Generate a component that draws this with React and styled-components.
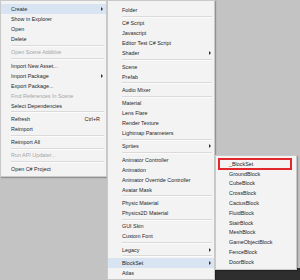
import React from 'react'
import styled, { createGlobalStyle } from 'styled-components'

const GlobalStyle = createGlobalStyle`
    html, body {
        margin: 0;
        padding: 0;
        background: #c3c3c3;
    }
`

const mainItems = [
    { label: 'Create', arrow: true, active: true },
    { label: 'Show in Explorer' },
    { label: 'Open' },
    { label: 'Delete' },
    '-',
    { label: 'Open Scene Additive', disabled: true },
    '-',
    { label: 'Import New Asset...' },
    { label: 'Import Package', arrow: true },
    { label: 'Export Package...' },
    { label: 'Find References In Scene', disabled: true },
    { label: 'Select Dependencies' },
    '-',
    { label: 'Refresh', shortcut: 'Ctrl+R' },
    { label: 'Reimport' },
    '-',
    { label: 'Reimport All' },
    '-',
    { label: 'Run API Updater...', disabled: true },
    '-',
    { label: 'Open C# Project' },
]

const createItems = [
    { label: 'Folder' },
    '-',
    { label: 'C# Script' },
    { label: 'Javascript' },
    { label: 'Editor Test C# Script' },
    { label: 'Shader', arrow: true },
    '-',
    { label: 'Scene' },
    { label: 'Prefab' },
    '-',
    { label: 'Audio Mixer' },
    '-',
    { label: 'Material' },
    { label: 'Lens Flare' },
    { label: 'Render Texture' },
    { label: 'Lightmap Parameters' },
    '-',
    { label: 'Sprites', arrow: true },
    '-',
    { label: 'Animator Controller' },
    { label: 'Animation' },
    { label: 'Animator Override Controller' },
    { label: 'Avatar Mask' },
    '-',
    { label: 'Physic Material' },
    { label: 'Physics2D Material' },
    '-',
    { label: 'GUI Skin' },
    { label: 'Custom Font' },
    '-',
    { label: 'Legacy', arrow: true },
    '-',
    { label: 'BlockSet', arrow: true, active: true },
    { label: 'Atlas' },
]

const blockItems = [
    { label: '_BlockSet', marked: true },
    { label: 'GroundBlock' },
    { label: 'CubeBlock' },
    { label: 'CrossBlock' },
    { label: 'CactusBlock' },
    { label: 'FluidBlock' },
    { label: 'StairBlock' },
    { label: 'MeshBlock' },
    { label: 'GameObjectBlock' },
    { label: 'FenceBlock' },
    { label: 'DoorBlock' },
]

const Menu = ({ items, ...rest }) => (
    <MenuBox {...rest}>
        {items.map((item, i) =>
            item === '-' ? (
                <Separator key={i} />
            ) : (
                <Row
                    key={i}
                    $active={item.active}
                    $disabled={item.disabled}
                    $marked={item.marked}>
                    <Label>{item.label}</Label>
                    {item.shortcut && <Shortcut>{item.shortcut}</Shortcut>}
                    {item.arrow && <Arrow />}
                </Row>
            )
        )}
    </MenuBox>
)

const App = () => {
    return (
        <>
            <GlobalStyle />
            <Desktop>
                <Menu items={mainItems} $width={107} $indent={11} $top={3} $bottom={2} />
                <Menu items={createItems} $width={108} $indent={15} $top={4} $bottom={1} />
                <Menu
                    items={blockItems}
                    $width={82}
                    $indent={14}
                    $top={3}
                    $bottom={2}
                    $offset={155}
                    $row={9.8}
                />
            </Desktop>
        </>
    )
}

export default App

const Desktop = styled.div`
    position: relative;
    width: 300px;
    height: 280px;
    overflow: hidden;
    display: flex;
    align-items: flex-start;
    background: #c3c3c3;
    font-family: 'Liberation Sans', Arial, sans-serif;

    &::before {
        content: '';
        position: absolute;
        left: 183px;
        right: 0;
        top: 268px;
        bottom: 0;
        background: #2e2e2e;
    }
`

const MenuBox = styled.div`
    position: relative;
    z-index: 1;
    flex: none;
    box-sizing: border-box;
    width: ${(p) => p.$width}px;
    margin-top: ${(p) => p.$offset || 0}px;
    padding: ${(p) => p.$top}px 0 ${(p) => p.$bottom}px;
    background: #f3f3f3;
    border: 1px solid #c9c9c9;
    box-shadow: 1px 1px 1px rgba(0, 0, 0, 0.25);
    --indent: ${(p) => p.$indent}px;
    --row: ${(p) => p.$row || 10}px;
`

const Row = styled.div`
    position: relative;
    display: flex;
    align-items: center;
    height: var(--row);
    padding: 0 9px 0 calc(var(--indent) - 1px);
    font-size: 5.4px;
    color: ${(p) => (p.$disabled ? '#a5a5a5' : '#262626')};
    background: ${(p) => (p.$active ? '#d8e4f1' : 'transparent')};
    white-space: nowrap;

    ${(p) =>
        p.$marked &&
        `
        &::after {
            content: '';
            position: absolute;
            left: 2px;
            right: 4px;
            top: -1px;
            bottom: -1px;
            border: 2px solid #e3262b;
        }
    `}
`

const Label = styled.span`
    flex: 1;
`

const Shortcut = styled.span`
    margin-right: -3px;
`

const Arrow = styled.span`
    position: absolute;
    right: 3px;
    top: 50%;
    margin-top: -2px;
    width: 0;
    height: 0;
    border-left: 2.5px solid #333;
    border-top: 2px solid transparent;
    border-bottom: 2px solid transparent;
`

const Separator = styled.div`
    height: 3.3px;
    margin-left: calc(var(--indent) - 1px);
    margin-right: 2px;
    display: flex;
    align-items: center;

    &::before {
        content: '';
        flex: 1;
        height: 1px;
        background: #dadada;
        border-bottom: 1px solid #fbfbfb;
    }
`
